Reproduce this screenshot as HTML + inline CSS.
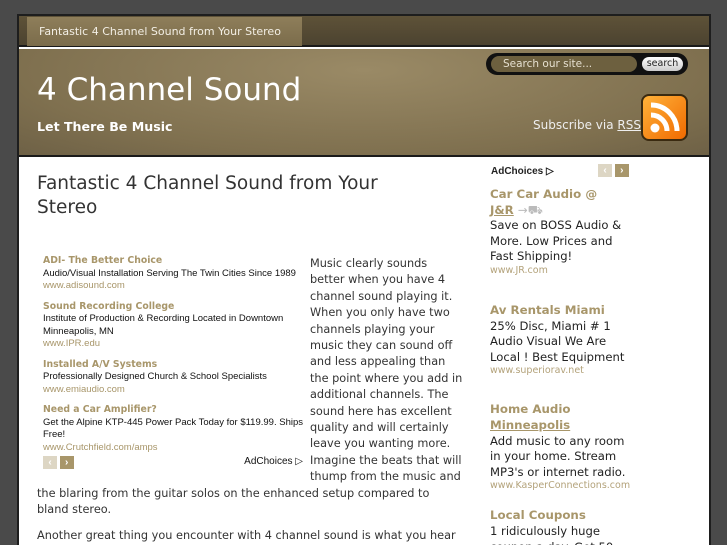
<!DOCTYPE html>
<html style="height:545px;overflow:hidden"><head><meta charset="utf-8"><style>
*{margin:0;padding:0;box-sizing:border-box}
body{width:727px;height:545px;overflow:hidden;background:#4a4a4a;font-family:"DejaVu Sans",sans-serif;position:relative}
.wrap{position:absolute;left:17px;top:14px;width:694px;height:540px;border:2px solid #1e1e1e;background:#fff}
.nav{position:absolute;left:0;top:0;width:690px;height:31px;background:linear-gradient(#5e5238,#4c4330);border-bottom:2px solid #1a1a1a}
.tab{position:absolute;left:8px;top:1px;width:275px;height:29px;background:linear-gradient(#8e7e5a,#7b6c4b);color:#f2eee4;font-size:11px;line-height:29px;padding-left:12px;white-space:nowrap}
.hdr{position:absolute;left:0;top:33px;width:690px;height:108px;background:radial-gradient(ellipse at 50% 20%,#9a8a66,#7f704f 70%,#6e6146);border-bottom:2px solid #1a1a1a}
.t1{position:absolute;left:18px;top:23px;color:#fff;font-size:31px}
.t2{position:absolute;left:18px;top:70px;color:#fff;font-size:12.6px;font-weight:bold}
.srch{position:absolute;left:467px;top:4px;width:202px;height:22px;background:#111;border-radius:11px}
.srch .in{position:absolute;left:5px;top:3px;width:146px;height:16px;background:#6d603f;border-radius:8px;color:#e6e0d0;font-size:10.5px;line-height:16px;padding-left:12px}
.srch .bt{position:absolute;left:156px;top:4px;width:41px;height:14px;background:linear-gradient(#fff,#ccc);border-radius:7px;font-size:9.5px;line-height:14px;text-align:center;color:#222}
.sub{position:absolute;left:514px;top:69px;color:#eee;font-size:12px}
.sub u{color:#eee}
.rss{position:absolute;left:622px;top:45px;width:47px;height:47px;border-radius:8px;background:linear-gradient(135deg,#ffb23a,#f06a00);border:2px solid #3a2a10}
h1{position:absolute;left:37px;top:172px;font-size:18.5px;font-weight:normal;color:#333;line-height:24px;width:400px}
.ads{position:absolute;left:43px;top:255px;width:270px;font-family:"Liberation Sans",sans-serif;font-size:9.5px;color:#111}
.ads .h{color:#a8966a;font-weight:bold;font-family:"DejaVu Sans",sans-serif;font-size:9.3px}
.ads .u{color:#a8966a;margin-bottom:8px}
.ads div{line-height:12.5px}
.body{position:absolute;left:37px;top:256px;width:427px;font-size:11.3px;line-height:16.4px;color:#333}
.fl{float:left;width:273px;height:228px}
.side{position:absolute;left:472px;top:150px;width:165px;font-size:11.6px;line-height:15.6px;color:#222}
.side .h{color:#a8966a;font-weight:bold;font-size:11.8px}
.side .u{color:#b3a27a;font-size:9.5px;line-height:12px}
.arr{display:inline-block;width:14px;height:13px;background:#a8966a;color:#fff;font-size:10px;line-height:13px;text-align:center;font-weight:bold}
.arr.l{background:#ddd6c4}
</style></head><body>
<div class="wrap">
<div class="nav"><div class="tab">Fantastic 4 Channel Sound from Your Stereo</div></div>
<div class="hdr">
<div class="t1">4 Channel Sound</div>
<div class="t2">Let There Be Music</div>
<div class="srch"><div class="in">Search our site...</div><div class="bt">search</div></div>
<div class="sub">Subscribe via <u>RSS</u></div>
<div class="rss"><svg width="43" height="43" viewBox="0 0 43 43"><circle cx="12" cy="32" r="4.5" fill="#fff"/><path d="M8 19a16 16 0 0 1 16 16" stroke="#fff" stroke-width="5" fill="none"/><path d="M8 9a26 26 0 0 1 26 26" stroke="#fff" stroke-width="5" fill="none"/></svg></div>
</div>
</div>
<h1>Fantastic 4 Channel Sound from Your Stereo</h1>
<div class="ads">
<div class="h">ADI- The Better Choice</div><div>Audio/Visual Installation Serving The Twin Cities Since 1989</div><div class="u">www.adisound.com</div>
<div class="h">Sound Recording College</div><div>Institute of Production &amp; Recording Located in Downtown Minneapolis, MN</div><div class="u">www.IPR.edu</div>
<div class="h">Installed A/V Systems</div><div>Professionally Designed Church &amp; School Specialists</div><div class="u">www.emiaudio.com</div>
<div class="h">Need a Car Amplifier?</div><div>Get the Alpine KTP-445 Power Pack Today for $119.99. Ships Free!</div><div class="u" style="margin-bottom:2px">www.Crutchfield.com/amps</div>
<div style="position:relative;height:14px;width:260px"><span class="arr l">‹</span> <span class="arr">›</span><span style="position:absolute;right:0;top:0;font-size:10px">AdChoices ▷</span></div>
</div>
<div class="body"><div class="fl"></div>Music clearly sounds better when you have 4 channel sound playing it. When you only have two channels playing your music they can sound off and less appealing than the point where you add in additional channels. The sound here has excellent quality and will certainly leave you wanting more. Imagine the beats that will thump from the music and the blaring from the guitar solos on the enhanced setup compared to bland stereo.<div style="height:9px;clear:both"></div>Another great thing you encounter with 4 channel sound is what you hear</div>
<div class="side">
<div style="position:relative;height:18px;font-family:'Liberation Sans',sans-serif;font-size:10px;font-weight:bold;padding-left:19px;padding-top:17px;line-height:1;white-space:nowrap">AdChoices ▷<span style="position:absolute;left:126px;top:14px"><span class="arr l">‹</span> <span class="arr">›</span></span></div>
<div style="padding-left:18px;padding-top:19px">
<div class="h">Car Car Audio @<br><u>J&amp;R</u> <span style="color:#bbb;font-weight:normal">→⛟</span></div>
<div>Save on BOSS Audio &amp; More. Low Prices and Fast Shipping!</div><div class="u">www.JR.com</div>
<div style="height:26px"></div>
<div class="h">Av Rentals Miami</div><div>25% Disc, Miami # 1 Audio Visual We Are Local ! Best Equipment</div><div class="u">www.superiorav.net</div>
<div style="height:25px"></div>
<div class="h">Home Audio<br><u>Minneapolis</u></div><div>Add music to any room in your home. Stream MP3's or internet radio.</div><div class="u">www.KasperConnections.com</div>
<div style="height:16px"></div>
<div class="h">Local Coupons</div><div>1 ridiculously huge coupon a day. Get 50-</div>
</div></div>
</body></html>
